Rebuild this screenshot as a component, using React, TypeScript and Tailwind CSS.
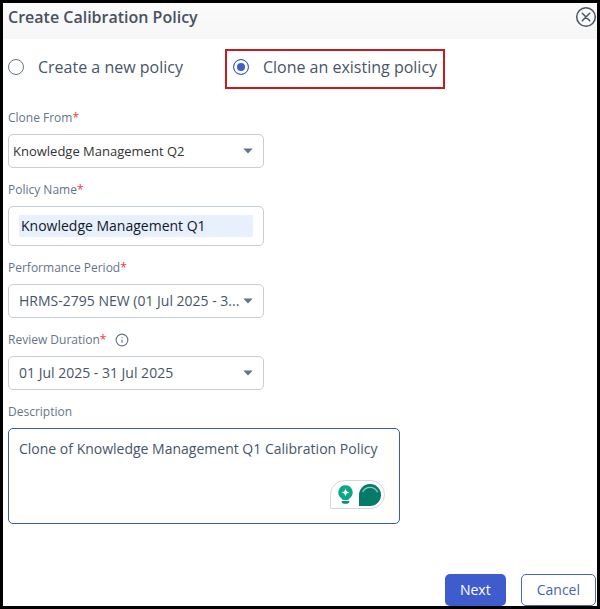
import React, { useState } from 'react';
import { Info } from 'lucide-react';

type SelectFieldProps = {
  id: string;
  label: string;
  options: string[];
  className: string;
  info?: boolean;
};

const Caret = () => (
  <svg
    viewBox="0 0 10 6"
    className="pointer-events-none absolute right-[11px] top-1/2 h-[6px] w-[10px] -translate-y-1/2 text-[#64748b]"
  >
    <path d="M0.3 0.4h9.4L5 5.6z" fill="currentColor" />
  </svg>
);

const Required = () => <span className="text-[#f03a3a]">*</span>;

const SelectField: React.FC<SelectFieldProps> = ({ id, label, options, className, info }) => (
  <div className="flex w-full max-w-64 flex-col gap-[7px]">
    <div className="flex items-center gap-[9px]">
      <label htmlFor={id} className="text-[12px] leading-[18px] text-[#64748b]">
        {label}
        <Required />
      </label>
      {info && (
        <button type="button" aria-label="About review duration" className="text-[#64748b]">
          <Info size={14} strokeWidth={2} />
        </button>
      )}
    </div>
    <div className="relative flex">
      <select
        id={id}
        className={`h-[34px] w-full appearance-none truncate rounded-[5px] border border-[#c3ced6] bg-white outline-none ${className}`}
      >
        {options.map((option) => (
          <option key={option}>{option}</option>
        ))}
      </select>
      <Caret />
    </div>
  </div>
);

// Writing assistant badge shown over the description box
const AssistantBadge = () => (
  <div className="absolute bottom-[15px] right-[15px] flex h-[29px] w-[55px] items-center gap-[6px] rounded-full rounded-bl-none border border-[#d3d6de] bg-white pl-[7px]">
    <svg viewBox="0 0 15 19" className="h-[19px] w-[15px] shrink-0">
      <path
        d="M7.5 0.2a7.2 7.2 0 0 0-3.9 13.2c.6.4.9.9 1.1 1.6h5.6c.2-.7.5-1.2 1.1-1.6A7.2 7.2 0 0 0 7.5.2z"
        fill="#0ba886"
      />
      <path
        d="M7.5 3.2c.5 2.7 1.4 3.6 4.2 4.2-2.8.6-3.7 1.5-4.2 4.2-.5-2.7-1.4-3.6-4.2-4.2 2.8-.6 3.7-1.5 4.2-4.2z"
        fill="#fff"
      />
      <path d="M3.6 16h7.8c0 1.5-.9 2.7-2.4 2.7H6c-1.5 0-2.4-1.2-2.4-2.7z" fill="#0b8f72" />
    </svg>
    <svg viewBox="0 0 22 22" className="h-[22px] w-[22px] shrink-0">
      <path d="M0 22V11a11 11 0 1 1 11 11z" fill="#057a68" />
      <path d="M4 7.4a8.2 8.2 0 0 1 14.3.3" fill="none" stroke="#8fcabe" strokeWidth="1.4" strokeLinecap="round" />
    </svg>
  </div>
);

const radioClass =
  'h-4 w-4 shrink-0 appearance-none rounded-full border border-[#64748b] bg-white checked:border-[#3f5ccc] checked:bg-[#3f5ccc] checked:shadow-[inset_0_0_0_3px_#fff]';

const CreateCalibrationPolicy: React.FC = () => {
  const [mode, setMode] = useState('clone');
  const [policyName, setPolicyName] = useState('Knowledge Management Q1');
  const [description, setDescription] = useState('Clone of Knowledge Management Q1 Calibration Policy');

  return (
    <form
      onSubmit={(e) => e.preventDefault()}
      className="flex min-h-screen flex-col border-3 border-black bg-white font-['Open_Sans',sans-serif] text-[#475569]"
    >
      <header className="flex h-9 items-center justify-between bg-linear-to-b from-[#fbfbfc] to-[#f6f6f6] pb-2 pl-[5px]">
        <h1 className="text-[16px] font-semibold leading-6 text-[#475060]">Create Calibration Policy</h1>
        <button type="button" aria-label="Close" className="text-[#475569]">
          <svg viewBox="0 0 22 22" className="h-[22px] w-[22px]" fill="none" stroke="currentColor" strokeWidth="1.5">
            <circle cx="11" cy="11" r="9.3" />
            <path d="M7.3 7.3l7.4 7.4M14.7 7.3l-7.4 7.4" strokeLinecap="round" />
          </svg>
        </button>
      </header>

      <div className="flex items-center gap-[42px] pl-[5px] pt-[10px]">
        <label className="flex items-center gap-[14px] pb-1 text-[16px] leading-6">
          <input
            type="radio"
            name="mode"
            className={radioClass}
            checked={mode === 'new'}
            onChange={() => setMode('new')}
          />
          Create a new policy
        </label>
        <label className="flex h-10 items-center gap-[14px] border-2 border-[#c41c1f] px-[6px] pb-1 text-[16px] leading-6">
          <input
            type="radio"
            name="mode"
            className={radioClass}
            checked={mode === 'clone'}
            onChange={() => setMode('clone')}
          />
          Clone an existing policy
        </label>
      </div>

      <div className="flex flex-col gap-[13px] px-[5px] pt-5">
        <SelectField
          id="clone-from"
          label="Clone From"
          options={['Knowledge Management Q2']}
          className="pl-1 pr-6 pt-px text-[13px] text-[#333]"
        />

        <div className="flex w-full max-w-64 flex-col gap-[7px]">
          <label htmlFor="policy-name" className="text-[12px] leading-[18px] text-[#64748b]">
            Policy Name
            <Required />
          </label>
          <div className="flex h-10 items-center rounded-[5px] border border-[#c3ced6] px-[10px]">
            <input
              id="policy-name"
              type="text"
              value={policyName}
              onChange={(e) => setPolicyName(e.target.value)}
              className="h-[22px] w-full bg-[#e8f0fe] px-[2px] pb-px text-[14px] text-[#111827] outline-none"
            />
          </div>
        </div>

        <SelectField
          id="performance-period"
          label="Performance Period"
          options={['HRMS-2795 NEW (01 Jul 2025 - 3...']}
          className="pb-px pl-[10px] pr-5 text-[14px] text-[#475569]"
        />
        <SelectField
          id="review-duration"
          label="Review Duration"
          options={['01 Jul 2025 - 31 Jul 2025']}
          className="pb-px pl-[10px] pr-5 text-[14px] text-[#475569]"
          info
        />

        <div className="flex w-full max-w-[392px] flex-col gap-[7px]">
          <label htmlFor="description" className="text-[12px] leading-[18px] text-[#64748b]">
            Description
          </label>
          <div className="relative flex">
            <textarea
              id="description"
              value={description}
              onChange={(e) => setDescription(e.target.value)}
              className="h-24 w-full resize-none rounded-[5px] border border-[#3f5aae] px-[10px] py-[10px] text-[14px] leading-5 text-[#475569] outline-none"
            />
            <AssistantBadge />
          </div>
        </div>
      </div>

      <footer className="mt-auto flex justify-end gap-[15px] pr-px pt-6">
        <button type="submit" className="h-8 rounded-[5px] bg-[#3f5ccc] px-[15px] pb-px text-[14px] font-medium text-white">
          Next
        </button>
        <button
          type="button"
          className="h-8 rounded-[5px] border border-[#4a66b8] bg-white px-[15px] pb-px text-[14px] text-[#4a63b0]"
        >
          Cancel
        </button>
      </footer>
    </form>
  );
};

export default CreateCalibrationPolicy;
